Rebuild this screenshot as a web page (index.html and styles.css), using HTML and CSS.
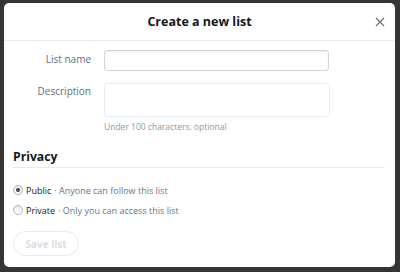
FILE: index.html
```html
<!DOCTYPE html>
<html lang="en">
<head>
    <meta charset="UTF-8">
    <meta name="viewport" content="width=device-width, initial-scale=1.0">
    <title>Create a new list</title>
    <link rel="stylesheet" href="styles.css">
</head>
<body>
    <div class="modal">
        <div class="modal-header">
            <h2>Create a new list</h2>
            <button class="close-btn" aria-label="Close">
                <svg width="10" height="10" viewBox="0 0 10 10">
                    <path d="M1 1L9 9M9 1L1 9" stroke="#66757f" stroke-width="1.3" fill="none"/>
                </svg>
            </button>
        </div>

        <div class="modal-body">
            <div class="form-row">
                <label for="listName">List name</label>
                <input type="text" id="listName" class="text-input">
            </div>

            <div class="form-row">
                <label for="listDesc" class="top-label">Description</label>
                <div class="field">
                    <textarea id="listDesc" class="text-area"></textarea>
                    <div class="hint">Under 100 characters, optional</div>
                </div>
            </div>

            <h3 class="section-title">Privacy</h3>

            <div class="radio-list">
                <label class="radio-row">
                    <input type="radio" name="privacy" checked>
                    <span class="radio-name">Public</span>
                    <span class="radio-desc">· Anyone can follow this list</span>
                </label>
                <label class="radio-row">
                    <input type="radio" name="privacy">
                    <span class="radio-name">Private</span>
                    <span class="radio-desc">· Only you can access this list</span>
                </label>
            </div>

            <button class="save-btn" disabled>Save list</button>
        </div>
    </div>
</body>
</html>
```

FILE: styles.css
```css
body {
    margin: 0;
    background-color: #353535;
    font-family: "Open Sans", "Noto Sans", Arial, sans-serif;
    color: #14171a;
}

.modal {
    width: 391px;
    height: 264px;
    margin: 3px 0 0 4px;
    background-color: white;
    border-radius: 5px;
    overflow: hidden;
}

.modal-header {
    height: 37px;
    border-bottom: 1px solid #e6ecf0;
    display: flex;
    align-items: center;
    justify-content: center;
    position: relative;
}

.modal-header h2 {
    margin: 0;
    font-size: 12.5px;
    font-weight: bold;
    color: #14171a;
}

.close-btn {
    position: absolute;
    right: 10px;
    top: 14px;
    padding: 0;
    border: none;
    background: none;
    width: 10px;
    height: 10px;
    display: flex;
}

.modal-body {
    padding: 9px 9px 0 9px;
}

.form-row {
    display: flex;
    gap: 13px;
    margin-bottom: 12px;
}

.form-row label {
    width: 78px;
    text-align: right;
    font-size: 10px;
    color: #5f6f7b;
    line-height: 19px;
}

.form-row .top-label {
    line-height: 17px;
}

.text-input {
    width: 225px;
    height: 21px;
    box-sizing: border-box;
    border: 1px solid #ccd6dd;
    border-radius: 3px;
    box-shadow: inset 0 1px 2px rgba(0,0,0,0.08);
    margin: 0;
}

.text-area {
    display: block;
    width: 226px;
    height: 34px;
    box-sizing: border-box;
    border: 1px solid #e6ecf0;
    border-radius: 3px;
    resize: none;
    margin: 0;
}

.hint {
    margin-top: 4px;
    font-size: 8.5px;
    color: #8899a6;
}

.section-title {
    margin: 16px 1px 0 0;
    padding-bottom: 2px;
    border-bottom: 1px solid #e6ecf0;
    font-size: 12.2px;
    font-weight: bold;
    color: #14171a;
}

.radio-list {
    margin-top: 15px;
    display: flex;
    flex-direction: column;
    gap: 6px;
}

.radio-row {
    display: flex;
    align-items: center;
    font-size: 9px;
    height: 14px;
}

.radio-row input {
    appearance: none;
    margin: 0 3px 0 0;
    width: 10px;
    height: 10px;
    box-sizing: border-box;
    border: 1px solid #a8b2ba;
    border-radius: 50%;
    background: linear-gradient(#e9ecee, #ffffff);
    display: flex;
    align-items: center;
    justify-content: center;
}

.radio-row input:checked::after {
    content: "";
    width: 4px;
    height: 4px;
    border-radius: 50%;
    background-color: #444;
}

.radio-name {
    color: #14171a;
    margin-right: 3px;
}

.radio-desc {
    color: #657786;
}

.save-btn {
    margin-top: 14px;
    width: 66px;
    height: 25px;
    border: 1px solid #e6ecf0;
    border-radius: 13px;
    background: white;
    color: #d8e0e6;
    font-family: inherit;
    font-size: 10px;
    font-weight: bold;
}
```
